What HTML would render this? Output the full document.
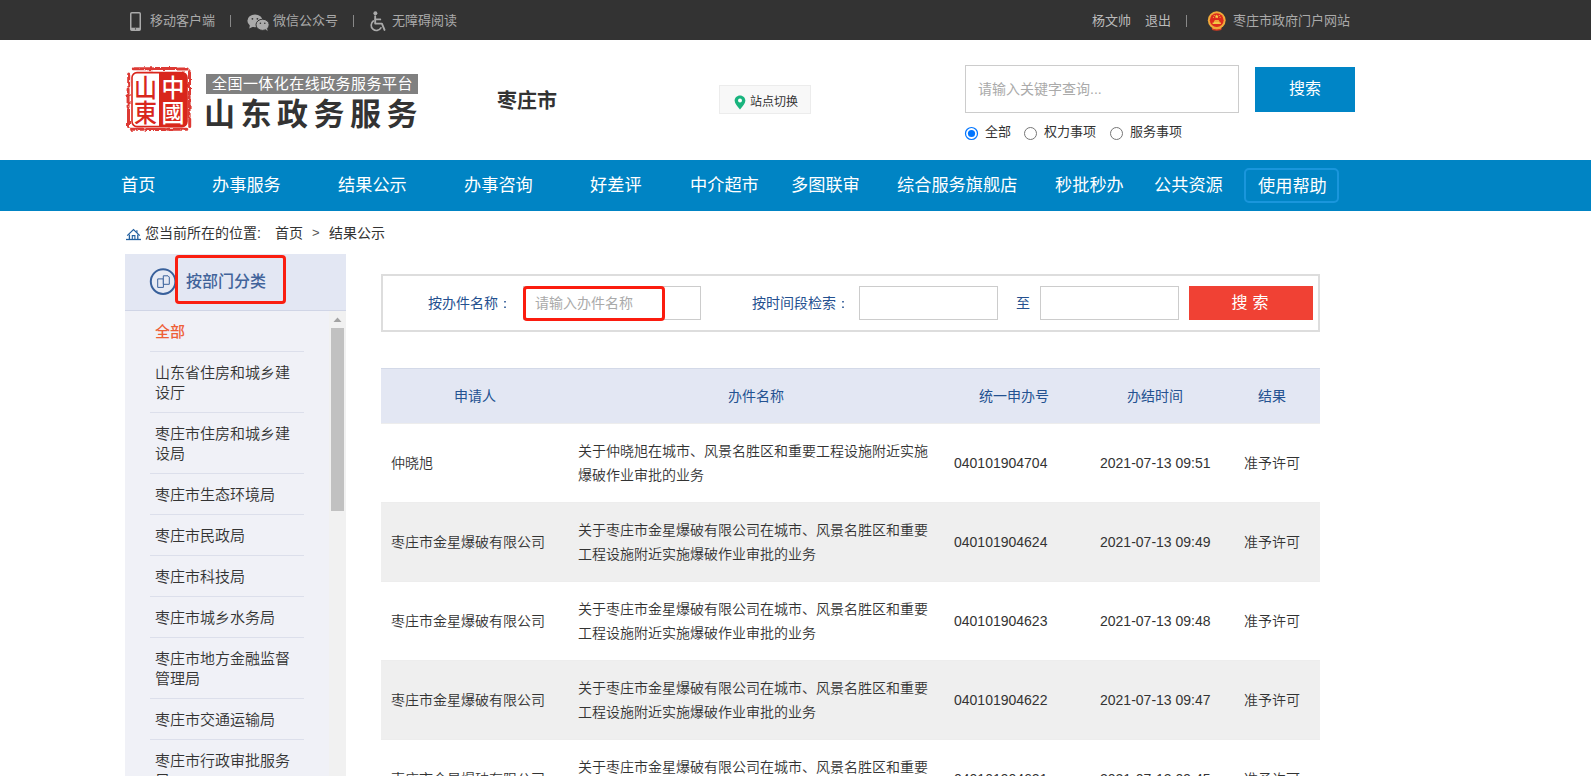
<!DOCTYPE html>
<html lang="zh-CN">
<head>
<meta charset="utf-8">
<title>结果公示 - 山东政务服务</title>
<style>
*{box-sizing:border-box;margin:0;padding:0}
html,body{width:1591px;height:776px;overflow:hidden;background:#fff}
body{font-family:"Liberation Sans","Noto Sans CJK SC",sans-serif;color:#333;font-size:14px;position:relative}
.abs{position:absolute;white-space:nowrap}
/* top bar */
#topbar{position:absolute;left:0;top:0;width:1591px;height:40px;background:#333}
#topbar .t{position:absolute;top:0;height:42px;line-height:42px;font-size:13px;color:#aaa;white-space:nowrap}
#topbar .sep{position:absolute;top:15px;width:1px;height:12px;background:#888}
/* header */
#hdr{position:absolute;left:0;top:40px;width:1591px;height:120px;background:#fff}
/* nav */
#nav{position:absolute;left:0;top:160px;width:1591px;height:51px;background:#0084c4}
#nav .n{position:absolute;top:0;height:51px;line-height:50px;font-size:17.2px;color:#fff;white-space:nowrap}
/* sidebar */
#side{position:absolute;left:125px;top:254px;width:221px;height:522px;background:#f0f1f7;overflow:hidden}
#side .hd{position:absolute;left:0;top:0;width:221px;height:57px;background:#e3e7f3;border-bottom:1px solid #d0d5e6}
#side .it{position:absolute;left:30px;width:160px;font-size:15px;line-height:20px;color:#333;font-weight:350}
#side .ln{position:absolute;left:25px;width:154px;height:1px;background:#dcdfeb}
/* table */
#tbl{position:absolute;left:381px;top:368px;width:939px}
.row{position:absolute;left:0;width:939px;height:79px;border-top:1px solid #ededed}
.row .c{position:absolute;font-size:14px;color:#333;white-space:nowrap;font-weight:350}
.th{position:absolute;top:0;height:56px;line-height:56px;font-size:14px;color:#245291;text-align:center;white-space:nowrap}
</style>
</head>
<body>
<div id="topbar">
<svg class="abs" style="left:130px;top:12px" width="11" height="19" viewBox="0 0 11 19"><rect x="0.75" y="0.75" width="9.5" height="17.5" rx="1" fill="none" stroke="#aaa" stroke-width="1.5"/><rect x="1" y="15.7" width="9" height="2.6" fill="#aaa"/><circle cx="5.5" cy="16.9" r="0.6" fill="#333"/></svg>
<span class="t" style="left:150px">移动客户端</span>
<span class="sep" style="left:230px"></span>
<svg class="abs" style="left:246.7px;top:13.5px" width="23" height="18" viewBox="0 0 23 18"><ellipse cx="8" cy="6.8" rx="7.6" ry="6.4" fill="#aaa"/><path d="M3 11 L2.2 14.6 L6.5 12.6z" fill="#aaa"/><ellipse cx="15.6" cy="10.8" rx="6.6" ry="5.6" fill="#aaa" stroke="#333" stroke-width="1"/><path d="M18.5 15 L20.6 17.2 L20 14z" fill="#aaa"/><circle cx="5.4" cy="4.8" r="0.9" fill="#333"/><circle cx="10.4" cy="4.8" r="0.9" fill="#333"/><circle cx="13.4" cy="9.2" r="0.8" fill="#333"/><circle cx="17.8" cy="9.2" r="0.8" fill="#333"/></svg>
<span class="t" style="left:273px">微信公众号</span>
<span class="sep" style="left:353px"></span>
<svg class="abs" style="left:370px;top:10.5px" width="16.6" height="21" viewBox="0 0 16 20" preserveAspectRatio="none"><circle cx="5.2" cy="2.1" r="1.9" fill="#aaa"/><path d="M5 5 V12 H11.5 L14 18" fill="none" stroke="#aaa" stroke-width="1.8" stroke-linecap="round" stroke-linejoin="round"/><path d="M5.2 8 H10" stroke="#aaa" stroke-width="1.6" stroke-linecap="round"/><path d="M3.2 9.5 A5 5 0 1 0 10.5 16" fill="none" stroke="#aaa" stroke-width="1.6" stroke-linecap="round"/></svg>
<span class="t" style="left:392px">无障碍阅读</span>
<span class="t" style="left:1092px;color:#bbb">杨文帅</span>
<span class="t" style="left:1145px;color:#bbb">退出</span>
<span class="sep" style="left:1186px"></span>
<svg class="abs" style="left:1206.5px;top:10.5px" width="19.5" height="20" viewBox="0 0 19.5 20"><path d="M4.2 14.5 L5.2 19 Q9.75 20.6 14.3 19 L15.3 14.5z" fill="#d43a22"/><path d="M5.6 17.2 Q9.75 18.6 13.9 17.2" fill="none" stroke="#f0b43c" stroke-width="0.9"/><circle cx="9.75" cy="9.2" r="8.9" fill="#f0a93a"/><circle cx="9.75" cy="9.2" r="6.9" fill="#dc2a1c"/><path d="M9.75 3.4l.62 1.3 1.4.16-1.04.96.28 1.4-1.26-.7-1.26.7.28-1.4-1.04-.96 1.4-.16z" fill="#f8d84a"/><circle cx="6.4" cy="6.2" r="0.55" fill="#f8d84a"/><circle cx="13.1" cy="6.2" r="0.55" fill="#f8d84a"/><circle cx="7.2" cy="4.6" r="0.5" fill="#f8d84a"/><circle cx="12.3" cy="4.6" r="0.5" fill="#f8d84a"/><path d="M5.6 13 H13.9 V11.6 H12.6 V10.2 H6.9 V11.6 H5.6z" fill="#f4c845"/><rect x="7.6" y="9.2" width="4.3" height="0.9" fill="#f4c845"/></svg>
<span class="t" style="left:1233px">枣庄市政府门户网站</span>
</div>
<div id="hdr">
<svg class="abs" style="left:122px;top:22px" width="74" height="74" viewBox="-2 -2 74 74">
<defs><filter id="rough" x="-10%" y="-10%" width="120%" height="120%"><feTurbulence type="fractalNoise" baseFrequency="0.22" numOctaves="2" seed="4" result="n"/><feDisplacementMap in="SourceGraphic" in2="n" scale="3" xChannelSelector="R" yChannelSelector="G"/></filter></defs>
<g filter="url(#rough)" transform="translate(0.3,1)"><path d="M9 3.8 H28 M30 3.4 H52 M54 4 H63 M65.2 6.5 V30 M64.8 32 V52 M65.4 54 V61.5 M62.5 64.2 H44 M41 64.6 H22 M19 64.2 H7 M4.2 61.5 V44 M3.8 41 V24 M4.4 21 V9" fill="none" stroke="#d9261c" stroke-width="3" stroke-linecap="round" opacity="0.9"/></g>
<rect x="8" y="8.6" width="55" height="54" rx="5" fill="#fff" stroke="#d9261c" stroke-width="1.6"/>
<path d="M35 8.6 H58 a5 5 0 0 1 5 5 V57.6 a5 5 0 0 1 -5 5 H35z" fill="#d9261c"/>
<text x="21.5" y="32.5" font-size="25" text-anchor="middle" fill="#d9261c" font-family="'Liberation Sans','Noto Sans CJK TC',sans-serif" font-weight="500" textLength="23" lengthAdjust="spacingAndGlyphs">山</text>
<text x="21.5" y="57.5" font-size="25" text-anchor="middle" fill="#d9261c" font-family="'Liberation Sans','Noto Sans CJK TC',sans-serif" font-weight="500" textLength="23" lengthAdjust="spacingAndGlyphs">東</text>
<text x="49" y="32.5" font-size="25" text-anchor="middle" fill="#fff" font-family="'Liberation Sans','Noto Sans CJK TC',sans-serif" font-weight="500" textLength="23" lengthAdjust="spacingAndGlyphs">中</text>
<text x="49" y="57.5" font-size="25" text-anchor="middle" fill="#fff" font-family="'Liberation Sans','Noto Sans CJK TC',sans-serif" font-weight="500" textLength="23" lengthAdjust="spacingAndGlyphs">國</text>
</svg>
<div class="abs" style="left:206px;top:34px;width:212px;height:20px;background:#808080;color:#fff;font-size:15px;line-height:20px;letter-spacing:0.45px;padding-left:6px">全国一体化在线政务服务平台</div>
<div class="abs" style="left:204px;top:53px;font-size:31px;line-height:44px;font-weight:bold;letter-spacing:5.5px;color:#333">山东政务服务</div>
<div class="abs" style="left:497px;top:47px;font-size:20px;line-height:28px;font-weight:bold;color:#333">枣庄市</div>
<div class="abs" style="left:719px;top:45px;width:92px;height:29px;background:#f8f8f8;border:1px solid #ececec"></div>
<svg class="abs" style="left:733.5px;top:55px" width="12" height="15" viewBox="0 0 12 15"><path d="M6 0.4 C2.9 0.4 0.6 2.7 0.6 5.6 C0.6 8.6 3.6 11.6 6 14.6 C8.4 11.6 11.4 8.6 11.4 5.6 C11.4 2.7 9.1 0.4 6 0.4z" fill="#19b47e"/><circle cx="6" cy="5.4" r="2" fill="#fff"/></svg>
<div class="abs" style="left:750px;top:48px;height:29px;line-height:29px;font-size:12px;color:#333">站点切换</div>
<div class="abs" style="left:965px;top:25px;width:274px;height:48px;border:1px solid #ccc;background:#fff;font-size:14px;line-height:46px;padding-left:12px;color:#aaa">请输入关键字查询...</div>
<div class="abs" style="left:1255px;top:27px;width:100px;height:45px;background:#0085c6;color:#fff;font-size:16px;line-height:44px;text-align:center">搜索</div>
<svg class="abs" style="left:964px;top:86px" width="15" height="15" viewBox="0 0 15 15"><circle cx="7.5" cy="7.5" r="6" fill="#fff" stroke="#0075ff" stroke-width="1.2"/><circle cx="7.5" cy="7.5" r="3.6" fill="#0075ff"/></svg>
<span class="abs" style="left:985px;top:82px;font-size:13px;line-height:20px;color:#333">全部</span>
<svg class="abs" style="left:1023px;top:86px" width="15" height="15" viewBox="0 0 15 15"><circle cx="7.5" cy="7.5" r="6" fill="#fff" stroke="#767676" stroke-width="1"/></svg>
<span class="abs" style="left:1044px;top:82px;font-size:13px;line-height:20px;color:#333">权力事项</span>
<svg class="abs" style="left:1109px;top:86px" width="15" height="15" viewBox="0 0 15 15"><circle cx="7.5" cy="7.5" r="6" fill="#fff" stroke="#767676" stroke-width="1"/></svg>
<span class="abs" style="left:1130px;top:82px;font-size:13px;line-height:20px;color:#333">服务事项</span>
</div>
<div id="nav">
<span class="n" style="left:121px">首页</span>
<span class="n" style="left:212px">办事服务</span>
<span class="n" style="left:338px">结果公示</span>
<span class="n" style="left:464px">办事咨询</span>
<span class="n" style="left:590px">好差评</span>
<span class="n" style="left:690px">中介超市</span>
<span class="n" style="left:791px">多图联审</span>
<span class="n" style="left:897px">综合服务旗舰店</span>
<span class="n" style="left:1055px">秒批秒办</span>
<span class="n" style="left:1154px">公共资源</span>
<span class="abs" style="left:1244px;top:8px;width:95px;height:35px;border:2px solid #1a96dc;border-radius:5px"></span>
<span class="n" style="left:1258px;top:1px">使用帮助</span>
</div>
<div id="crumb">
<svg class="abs" style="left:125px;top:228px" width="17" height="13" viewBox="0 0 17 13"><g fill="none" stroke="#23609f" stroke-width="1.3"><path d="M2.2 7.6 L8.5 1.6 L14.8 7.6"/><path d="M11.9 2.2 V4.8" stroke-width="1.2"/><path d="M4.4 6.6 V11 M12.8 6.6 V11"/><path d="M7.3 11 V7.6 H9.9 V11" stroke-width="1.1"/><path d="M1 11.5 H16"/></g></svg>
<span class="abs" style="left:145px;top:223px;font-size:14px;line-height:20px;color:#333">您当前所在的位置:</span>
<span class="abs" style="left:275px;top:223px;font-size:14px;line-height:20px;color:#333">首页</span>
<span class="abs" style="left:312px;top:223px;font-size:13px;line-height:20px;color:#555">&gt;</span>
<span class="abs" style="left:329px;top:223px;font-size:14px;line-height:20px;color:#333">结果公示</span>
</div>
<div id="side">
<div class="hd"></div>
<svg class="abs" style="left:24px;top:13px" width="29" height="29" viewBox="0 0 29 29"><circle cx="14.1" cy="14.6" r="12.3" fill="#e6eaf4" stroke="#38609b" stroke-width="2"/><path d="M8.7 11.9 H14.4 V20.4 H8.7z" fill="#e6eaf4" stroke="#3a629c" stroke-width="1"/><path d="M14.3 8.8 H19 L20.3 10.1 V17.3 H14.3z" fill="#e6eaf4" stroke="#3a629c" stroke-width="1"/></svg>
<div class="abs" style="left:61px;top:17px;font-size:16px;line-height:22px;font-weight:500;color:#41639a">按部门分类</div>
<div class="abs" style="left:50px;top:1px;width:111px;height:49px;border:3px solid #fa1e10;border-radius:4px"></div>
<div class="it" style="top:68px;color:#ee6037;font-weight:500">全部</div>
<div class="ln" style="top:97px"></div>
<div class="it" style="top:109px">山东省住房和城乡建<br>设厅</div>
<div class="ln" style="top:158px"></div>
<div class="it" style="top:170px">枣庄市住房和城乡建<br>设局</div>
<div class="ln" style="top:219px"></div>
<div class="it" style="top:231px">枣庄市生态环境局</div>
<div class="ln" style="top:260px"></div>
<div class="it" style="top:272px">枣庄市民政局</div>
<div class="ln" style="top:301px"></div>
<div class="it" style="top:313px">枣庄市科技局</div>
<div class="ln" style="top:342px"></div>
<div class="it" style="top:354px">枣庄市城乡水务局</div>
<div class="ln" style="top:383px"></div>
<div class="it" style="top:395px">枣庄市地方金融监督<br>管理局</div>
<div class="ln" style="top:444px"></div>
<div class="it" style="top:456px">枣庄市交通运输局</div>
<div class="ln" style="top:485px"></div>
<div class="it" style="top:497px">枣庄市行政审批服务<br>局</div>
<div class="ln" style="top:546px"></div>
<div class="abs" style="left:204px;top:57px;width:17px;height:465px;background:#f1f1f1"></div>
<svg class="abs" style="left:204px;top:57px" width="17" height="17" viewBox="0 0 17 17"><path d="M4.5 11 L8.5 6.6 L12.5 11z" fill="#a3a3a3"/></svg>
<div class="abs" style="left:206px;top:74px;width:13px;height:183px;background:#c1c1c1"></div>
</div>
<div id="search">
<div class="abs" style="left:381px;top:274px;width:939px;height:58px;border:2px solid #ddd;background:#fff"></div>
<span class="abs" style="left:428px;top:293px;font-size:14px;line-height:20px;color:#24508f">按办件名称<span style="font-family:'WenQuanYi Zen Hei',sans-serif;line-height:1">：</span></span>
<div class="abs" style="left:523px;top:286px;width:178px;height:34px;border:1px solid #ccc;background:#fff;font-size:14px;line-height:32px;padding-left:11px;color:#aaa">请输入办件名称</div>
<div class="abs" style="left:523px;top:286px;width:142px;height:35px;border:3px solid #fb1c0f;border-radius:4px"></div>
<span class="abs" style="left:752px;top:293px;font-size:14px;line-height:20px;color:#24508f">按时间段检索<span style="font-family:'WenQuanYi Zen Hei',sans-serif;line-height:1">：</span></span>
<div class="abs" style="left:859px;top:286px;width:139px;height:34px;border:1px solid #ccc;background:#fff"></div>
<span class="abs" style="left:1016px;top:293px;font-size:14px;line-height:20px;color:#24508f">至</span>
<div class="abs" style="left:1040px;top:286px;width:139px;height:34px;border:1px solid #ccc;background:#fff"></div>
<div class="abs" style="left:1189px;top:286px;width:124px;height:34px;background:#f04134;color:#fff;font-size:16px;line-height:33px;text-align:center;letter-spacing:5px;padding-left:3px;font-family:'Liberation Serif','Noto Sans CJK SC',sans-serif">搜索</div>
</div>
<div id="tbl">
<div class="abs" style="left:0;top:0;width:939px;height:55px;background:#e3e7f3;border-top:1px solid #d3d9e8"></div>
<span class="th" style="left:34px;width:120px">申请人</span>
<span class="th" style="left:315px;width:120px">办件名称</span>
<span class="th" style="left:573px;width:120px">统一申办号</span>
<span class="th" style="left:714px;width:120px">办结时间</span>
<span class="th" style="left:831px;width:120px">结果</span>
<div class="row" style="top:55px;background:#fff"><span class="c" style="left:10px;top:29px;line-height:20px">仲晓旭</span><span class="c" style="left:197px;top:15px;line-height:24px">关于仲晓旭在城市、风景名胜区和重要工程设施附近实施<br>爆破作业审批的业务</span><span class="c" style="left:573px;top:29px;line-height:20px">040101904704</span><span class="c" style="left:719px;top:29px;line-height:20px">2021-07-13 09:51</span><span class="c" style="left:863px;top:29px;line-height:20px">准予许可</span></div>
<div class="row" style="top:134px;background:#efefef"><span class="c" style="left:10px;top:29px;line-height:20px">枣庄市金星爆破有限公司</span><span class="c" style="left:197px;top:15px;line-height:24px">关于枣庄市金星爆破有限公司在城市、风景名胜区和重要<br>工程设施附近实施爆破作业审批的业务</span><span class="c" style="left:573px;top:29px;line-height:20px">040101904624</span><span class="c" style="left:719px;top:29px;line-height:20px">2021-07-13 09:49</span><span class="c" style="left:863px;top:29px;line-height:20px">准予许可</span></div>
<div class="row" style="top:213px;background:#fff"><span class="c" style="left:10px;top:29px;line-height:20px">枣庄市金星爆破有限公司</span><span class="c" style="left:197px;top:15px;line-height:24px">关于枣庄市金星爆破有限公司在城市、风景名胜区和重要<br>工程设施附近实施爆破作业审批的业务</span><span class="c" style="left:573px;top:29px;line-height:20px">040101904623</span><span class="c" style="left:719px;top:29px;line-height:20px">2021-07-13 09:48</span><span class="c" style="left:863px;top:29px;line-height:20px">准予许可</span></div>
<div class="row" style="top:292px;background:#efefef"><span class="c" style="left:10px;top:29px;line-height:20px">枣庄市金星爆破有限公司</span><span class="c" style="left:197px;top:15px;line-height:24px">关于枣庄市金星爆破有限公司在城市、风景名胜区和重要<br>工程设施附近实施爆破作业审批的业务</span><span class="c" style="left:573px;top:29px;line-height:20px">040101904622</span><span class="c" style="left:719px;top:29px;line-height:20px">2021-07-13 09:47</span><span class="c" style="left:863px;top:29px;line-height:20px">准予许可</span></div>
<div class="row" style="top:371px;background:#fff"><span class="c" style="left:10px;top:29px;line-height:20px">枣庄市金星爆破有限公司</span><span class="c" style="left:197px;top:15px;line-height:24px">关于枣庄市金星爆破有限公司在城市、风景名胜区和重要<br>工程设施附近实施爆破作业审批的业务</span><span class="c" style="left:573px;top:29px;line-height:20px">040101904621</span><span class="c" style="left:719px;top:29px;line-height:20px">2021-07-13 09:45</span><span class="c" style="left:863px;top:29px;line-height:20px">准予许可</span></div>
</div>
</body>
</html>
